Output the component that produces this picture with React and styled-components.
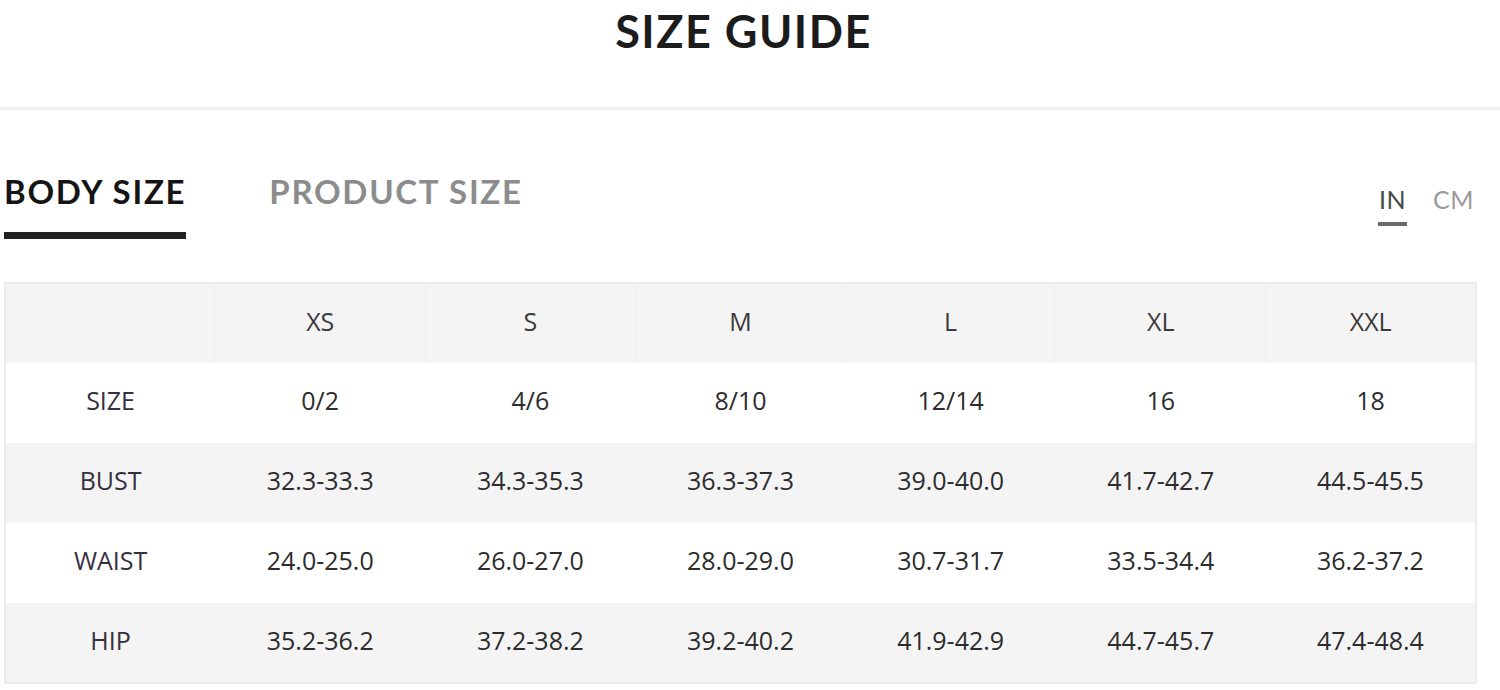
import React, { useState } from 'react';
import styled, { createGlobalStyle } from 'styled-components';

const GlobalStyle = createGlobalStyle`
  html, body {
    margin: 0;
    padding: 0;
    background: #ffffff;
  }
  body {
    font-family: Lato, "Open Sans", "Liberation Sans", sans-serif;
    color: #222;
  }
`;

const sizes = ['XS', 'S', 'M', 'L', 'XL', 'XXL'];

const rows = [
  { label: 'SIZE', values: ['0/2', '4/6', '8/10', '12/14', '16', '18'] },
  { label: 'BUST', values: ['32.3-33.3', '34.3-35.3', '36.3-37.3', '39.0-40.0', '41.7-42.7', '44.5-45.5'] },
  { label: 'WAIST', values: ['24.0-25.0', '26.0-27.0', '28.0-29.0', '30.7-31.7', '33.5-34.4', '36.2-37.2'] },
  { label: 'HIP', values: ['35.2-36.2', '37.2-38.2', '39.2-40.2', '41.9-42.9', '44.7-45.7', '47.4-48.4'] },
];

const SizeGuide = () => {
  const [tab, setTab] = useState('body');
  const [unit, setUnit] = useState('in');

  return (
    <Page>
      <GlobalStyle />
      <Header>
        <Title>SIZE GUIDE</Title>
      </Header>
      <Divider />
      <Content>
        <TabBar>
          <Tabs>
            <Tab $active={tab === 'body'} onClick={() => setTab('body')}>BODY SIZE</Tab>
            <Tab $active={tab === 'product'} onClick={() => setTab('product')}>PRODUCT SIZE</Tab>
          </Tabs>
          <Units>
            <Unit $active={unit === 'in'} onClick={() => setUnit('in')}>IN</Unit>
            <Unit $active={unit === 'cm'} onClick={() => setUnit('cm')}>CM</Unit>
          </Units>
        </TabBar>
        <Table>
          <thead>
            <Row $shaded>
              <HeadCell />
              {sizes.map((s) => (
                <HeadCell key={s}>{s}</HeadCell>
              ))}
            </Row>
          </thead>
          <tbody>
            {rows.map((r, i) => (
              <Row key={r.label} $shaded={i % 2 === 1}>
                <LabelCell>{r.label}</LabelCell>
                {r.values.map((v, j) => (
                  <Cell key={j}>{v}</Cell>
                ))}
              </Row>
            ))}
          </tbody>
        </Table>
      </Content>
    </Page>
  );
};

const Page = styled.div`
  width: 1500px;
  height: 690px;
  overflow: hidden;
  background: #fff;
`;

const Header = styled.header`
  height: 107px;
  display: flex;
  justify-content: center;
  align-items: flex-start;
  padding-right: 13px;
  box-sizing: border-box;
`;

const Title = styled.h1`
  margin: 0;
  padding-top: 4px;
  font-family: Lato, "Open Sans", sans-serif;
  font-weight: 700;
  font-size: 45px;
  line-height: 54px;
  letter-spacing: 1.5px;
  color: #1c1c1c;
`;

const Divider = styled.div`
  height: 3px;
  background: #f2f2f2;
`;

const Content = styled.main`
  padding: 0 23px 0 4px;
`;

const TabBar = styled.div`
  display: flex;
  justify-content: space-between;
  align-items: flex-end;
  margin-top: 61px;
`;

const Tabs = styled.div`
  display: flex;
  gap: 83px;
`;

const Tab = styled.div`
  font-family: Lato, "Open Sans", sans-serif;
  font-weight: 700;
  font-size: 33px;
  line-height: 40px;
  letter-spacing: 1.7px;
  padding-bottom: 21px;
  border-bottom: 7px solid ${(p) => (p.$active ? '#222' : 'transparent')};
  color: ${(p) => (p.$active ? '#151515' : '#8c8c8c')};
  cursor: pointer;
`;

const Units = styled.div`
  display: flex;
  gap: 25px;
  margin-bottom: 13px;
  margin-right: 2px;
`;

const Unit = styled.div`
  font-family: Lato, "Open Sans", sans-serif;
  font-weight: 400;
  font-size: 25px;
  line-height: 30px;
  padding: 0 1px 8px;
  border-bottom: 4px solid ${(p) => (p.$active ? '#6b6b6b' : 'transparent')};
  color: ${(p) => (p.$active ? '#4a4a4a' : '#9a9a9a')};
  letter-spacing: 0.5px;
  cursor: pointer;
`;

const Table = styled.table`
  width: 100%;
  margin-top: 43px;
  border-collapse: collapse;
  table-layout: fixed;
  border: 2px solid #ececec;
`;

const Row = styled.tr`
  height: 80px;
  background: ${(p) => (p.$shaded ? '#f4f4f4' : '#ffffff')};
`;

const Cell = styled.td`
  text-align: center;
  vertical-align: middle;
  font-family: "Open Sans", "Liberation Sans", sans-serif;
  font-size: 25px;
  line-height: 30px;
  color: #2c2c2c;
  padding: 0 0 6px;
`;

const LabelCell = styled(Cell)`
  color: #353040;
`;

const HeadCell = styled.th`
  text-align: center;
  vertical-align: middle;
  font-family: "Open Sans", "Liberation Sans", sans-serif;
  font-weight: 400;
  font-size: 25px;
  line-height: 30px;
  color: #3a3a3a;
  padding: 0 0 6px;
  border-left: 1px solid #efefef;
`;

export default SizeGuide;
